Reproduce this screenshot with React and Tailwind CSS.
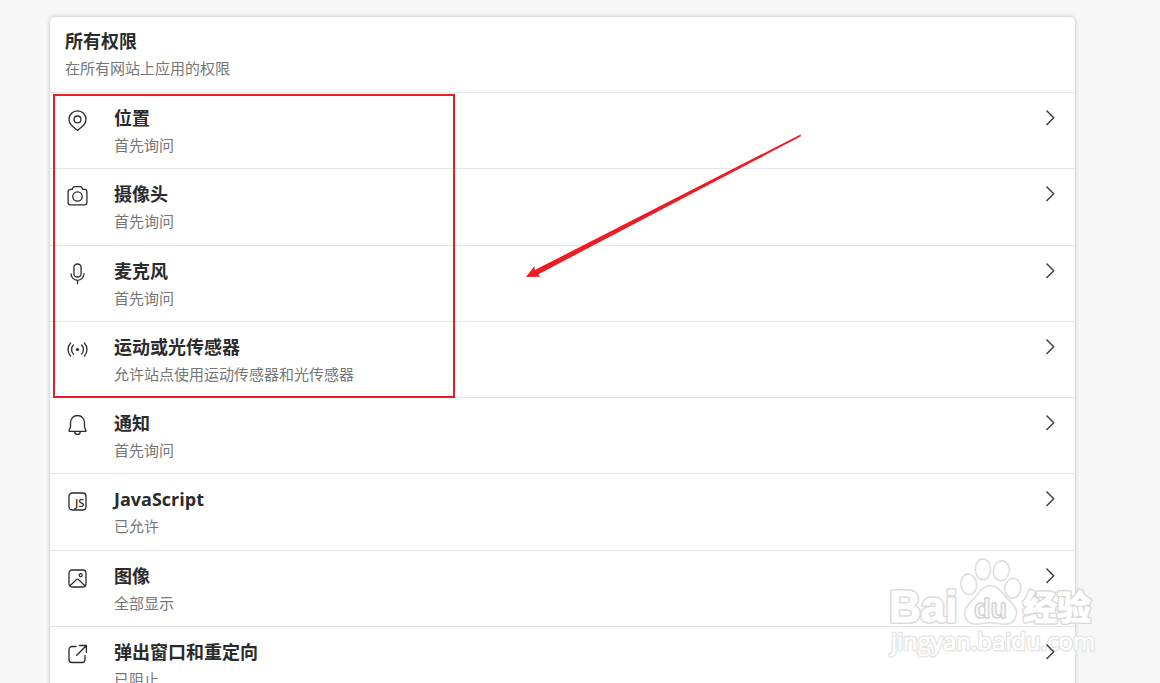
const IconFrame = ({ children }) => (
  <svg
    className="size-6 shrink-0"
    viewBox="0 0 24 24"
    fill="none"
    stroke="currentColor"
    strokeWidth="1.3"
    strokeLinecap="round"
    strokeLinejoin="round"
    aria-hidden="true"
  >
    {children}
  </svg>
);

const LocationIcon = () => (
  <IconFrame>
    <path d="M18.6 17.2 12.5 22.4 6.4 17.2A8.5 8.5 0 1 1 18.6 17.2Z" />
    <circle cx="12.5" cy="11.4" r="3.4" />
  </IconFrame>
);

const CameraIcon = () => (
  <IconFrame>
    <path d="M9.8 2.7h5.4c.8 0 1.4.4 1.8 1.1l.8 1.6h1.8a2.3 2.3 0 0 1 2.3 2.3v10.8a2.3 2.3 0 0 1-2.3 2.3H5.4a2.3 2.3 0 0 1-2.3-2.3V7.7a2.3 2.3 0 0 1 2.3-2.3h1.8l.8-1.6c.4-.7 1-1.1 1.8-1.1Z" />
    <circle cx="12.5" cy="12.5" r="4.7" />
  </IconFrame>
);

const MicrophoneIcon = () => (
  <IconFrame>
    <rect x="8.9" y="3" width="7.2" height="13" rx="3.6" />
    <path d="M6 12.8a6.5 6.5 0 0 0 13 0M12.5 19.5v3" />
  </IconFrame>
);

const SensorIcon = () => (
  <IconFrame>
    <circle cx="12.5" cy="12.5" r="1.6" fill="currentColor" stroke="none" />
    <path d="M8.4 8a6.5 6.5 0 0 0 0 9M16.6 8a6.5 6.5 0 0 1 0 9" />
    <path d="M5.6 6a9.5 9.5 0 0 0 0 13M19.4 6a9.5 9.5 0 0 1 0 13" />
  </IconFrame>
);

const BellIcon = () => (
  <IconFrame>
    <path d="M12.5 2.5a7 7 0 0 0-7 7v4.6L4.1 17.4c-.2.5.1.9.6.9h15.6c.5 0 .8-.4.6-.9l-1.4-3.3V9.5a7 7 0 0 0-7-7Z" />
    <path d="M9.8 18.7a2.7 2.7 0 0 0 5.4 0" />
  </IconFrame>
);

const JavaScriptIcon = () => (
  <IconFrame>
    <rect x="4" y="4" width="17" height="17" rx="3.2" />
    <text
      x="10"
      y="18"
      fontFamily="Open Sans"
      fontSize="11"
      fontWeight="600"
      fill="currentColor"
      stroke="none"
    >
      JS
    </text>
  </IconFrame>
);

const ImageIcon = () => (
  <IconFrame>
    <rect x="4" y="4" width="17" height="17" rx="3.2" />
    <circle cx="15.7" cy="9.2" r="1.5" />
    <path d="m5 19.8 6.4-6.2a1.6 1.6 0 0 1 2.2 0L20 19.8" />
  </IconFrame>
);

const PopupIcon = () => (
  <IconFrame>
    <path d="M11 4.5H7a3 3 0 0 0-3 3v10a3 3 0 0 0 3 3h10a3 3 0 0 0 3-3v-4" />
    <path d="M14.5 3.5h6.9v6.9M21.2 3.7 11.7 13.2" />
  </IconFrame>
);

const permissions = [
  { title: "位置", status: "首先询问", Icon: LocationIcon },
  { title: "摄像头", status: "首先询问", Icon: CameraIcon },
  { title: "麦克风", status: "首先询问", Icon: MicrophoneIcon },
  {
    title: "运动或光传感器",
    status: "允许站点使用运动传感器和光传感器",
    Icon: SensorIcon,
  },
  { title: "通知", status: "首先询问", Icon: BellIcon },
  { title: "JavaScript", status: "已允许", Icon: JavaScriptIcon },
  { title: "图像", status: "全部显示", Icon: ImageIcon },
  { title: "弹出窗口和重定向", status: "已阻止", Icon: PopupIcon },
];

const PermissionRow = ({ title, status, Icon }) => (
  <li className="border-t border-[#e6e6e6]">
    <button
      type="button"
      className="flex h-full w-full items-start pt-[13px] pr-4 pl-[15px] text-left"
    >
      <span className="pt-[2px]">
        <Icon />
      </span>
      <span className="ml-[25px] flex grow flex-col gap-1">
        <span className="text-[18px] leading-[25px] font-bold">{title}</span>
        <span className="text-[15px] leading-5 text-[#767676]">{status}</span>
      </span>
      <svg
        className="relative z-10 h-[22px] w-4 shrink-0"
        viewBox="0 0 16 22"
        fill="none"
        stroke="#3b3b3b"
        strokeWidth="1.4"
        aria-hidden="true"
      >
        <path d="m3.5 4.5 7.2 7.2-7.2 7.2" />
      </svg>
    </button>
  </li>
);

const Watermark = () => (
  <svg
    className="pointer-events-none absolute top-[533px] -right-[26px] h-[116px] w-[216px]"
    viewBox="0 0 216 116"
    strokeLinejoin="round"
  >
    <g fill="#ffffff" fillOpacity="0.8" stroke="#dedede" strokeWidth="1.6">
      <ellipse cx="83.7" cy="34.3" rx="7.9" ry="10.3" transform="rotate(-8 83.7 34.3)" />
      <ellipse cx="98" cy="19.3" rx="7.6" ry="10.4" />
      <ellipse cx="116.3" cy="20.7" rx="7.9" ry="10" transform="rotate(12 116.3 20.7)" />
      <ellipse cx="127.7" cy="38.3" rx="8" ry="10" transform="rotate(8 127.7 38.3)" />
      <path d="M105 35.7c7 0 11 4.5 14 9.3 4 6 12 9 12.500 17 .3 8-5.500 12.300-12 12.300-5 0-9-1.600-14.500-1.600s-9 1.600-14 1.600c-7 0-11.500-5-11.300-11.300.3-8 8-12 12.300-18 3-4.600 6.500-9.300 13-9.300Z" />
    </g>
    <defs>
      <g id="watermark-text">
        <text x="4" y="72" fontFamily="Liberation Sans" fontWeight="700" fontSize="44">
          Bai
        </text>
        <text x="138" y="70" fontFamily="Noto Sans CJK SC" fontWeight="700" fontSize="34">
          经验
        </text>
      </g>
      <text id="watermark-url" x="6" y="100" fontFamily="Open Sans" fontSize="24">
        jingyan.baidu.com
      </text>
    </defs>
    {/* Grey rim first, then the white letters on top of it */}
    <use href="#watermark-text" fill="#dadada" stroke="#dadada" strokeWidth="4" />
    <use href="#watermark-text" fill="#ffffff" stroke="#ffffff" strokeWidth="1" />
    <use href="#watermark-url" fill="#e2e2e2" stroke="#e2e2e2" strokeWidth="3" />
    <use href="#watermark-url" fill="#ffffff" stroke="#ffffff" strokeWidth="0.6" />
    <text
      x="89"
      y="68"
      fontFamily="Liberation Sans"
      fontWeight="700"
      fontSize="27"
      fill="#fbfbfb"
      stroke="#d4d4d4"
      strokeWidth="1.5"
    >
      du
    </text>
  </svg>
);

export default function App() {
  return (
    <div className="h-screen overflow-hidden bg-[#f7f7f7] pt-[17px] pr-[85px] pl-[50px] font-['Open_Sans','Noto_Sans_CJK_SC',sans-serif] text-[#2b2b2b]">
      <main className="relative rounded-[5px] bg-white shadow-[0_0_4px_rgba(0,0,0,0.24)]">
        <header className="flex flex-col gap-1 px-[15px] pt-3 pb-[14px]">
          <h1 className="text-[18px] leading-[25px] font-bold">所有权限</h1>
          <p className="text-[15px] leading-5 text-[#767676]">
            在所有网站上应用的权限
          </p>
        </header>
        <ul className="grid min-h-[610px] auto-rows-fr">
          {permissions.map((item) => (
            <PermissionRow key={item.title} {...item} />
          ))}
        </ul>

        {/* Highlight around the first four permissions */}
        <div className="pointer-events-none absolute top-[77px] left-[3px] h-[304px] w-[402px] border-2 border-[#ed1c24]" />
        <svg
          className="pointer-events-none absolute top-[117px] left-[476px] h-[144px] w-[276px]"
          viewBox="0 0 276 144"
          fill="#ed1c24"
        >
          <path d="M274.5.5 275 2.2 12.500 140.200 14 142.800 0 143 8.500 132 8.800 136Z" />
        </svg>
        <Watermark />
      </main>
    </div>
  );
}
